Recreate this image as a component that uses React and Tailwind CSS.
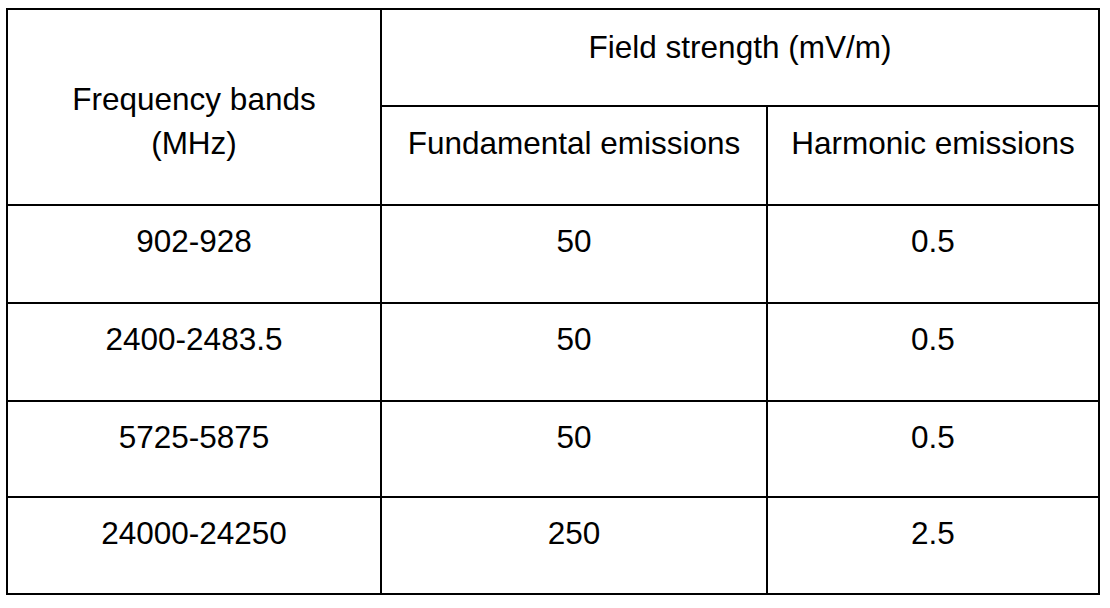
import React from "react";

const rows = [
  ["902-928", "50", "0.5"],
  ["2400-2483.5", "50", "0.5"],
  ["5725-5875", "50", "0.5"],
  ["24000-24250", "250", "2.5"],
];

const cell = "bg-white flex justify-center items-start text-center";

export default function App() {
  return (
    <div className="min-h-screen bg-white pl-[6px] pt-[8px]" style={{ fontFamily: "'Liberation Sans', Arial, sans-serif" }}>
      <div className="grid w-[1094px] grid-cols-[372px_384px_330px] grid-rows-[95px_97px_96px_96px_94px_95px] gap-[2px] bg-black p-[2px] text-[31.5px] leading-[44px] text-black">
        <div className={`${cell} row-span-2 pt-[67px]`}>
          Frequency bands
          <br />
          (MHz)
        </div>
        <div className={`${cell} col-span-2 pt-[15px]`}>Field strength (mV/m)</div>
        <div className={`${cell} pt-[14px]`}>Fundamental emissions</div>
        <div className={`${cell} pt-[14px]`}>Harmonic emissions</div>
        {rows.map((r) => (
          <React.Fragment key={r[0]}>
            {r.map((v, i) => (
              <div key={i} className={`${cell} pt-[13px]`}>
                {v}
              </div>
            ))}
          </React.Fragment>
        ))}
      </div>
    </div>
  );
}
